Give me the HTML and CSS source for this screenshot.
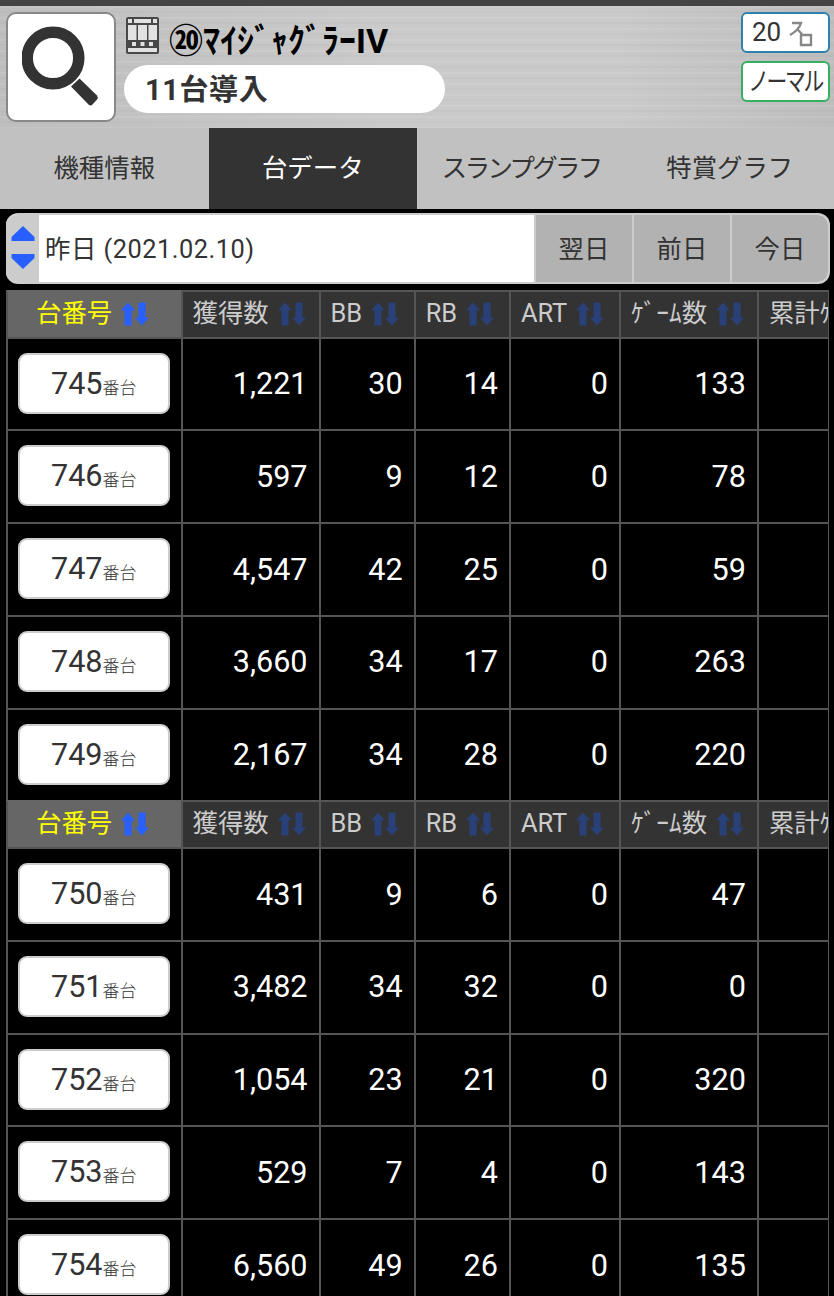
FILE: index.html
```html
<!doctype html>
<html lang="ja">
  <head>
    <meta charset="UTF-8" />
    <meta name="viewport" content="width=device-width, initial-scale=1.0" />
    <title>台データ</title>
    <link rel="stylesheet" href="styles.css">
  </head>
  <body>
    <svg class="defs" width="0" height="0">
      <symbol id="sort" viewBox="0 0 28 24">
        <path d="M7 .5 14 8.500h-3.500V23.500h-7V8.500H0z M17.500 .5h7V15.500H28L21 23.500 14 15.500h3.500z" />
      </symbol>
    </svg>

    <header class="header">
      <button class="search-btn">
        <svg width="84" height="90" viewBox="0 0 84 90">
          <circle cx="31" cy="41" r="25.800" fill="none" stroke="#333" stroke-width="11.500" />
          <path fill="#333" d="M49 69.500 57.500 61.500 75 78.500Q76.500 80.500 75 82.500L70 88Q68 89 66.500 87.500z" />
        </svg>
      </button>
      <div class="machine">
        <h1 class="machine-name">
          <svg width="33" height="37" viewBox="0 0 33 37">
            <rect width="33" height="37" rx="2" fill="#484848" />
            <path fill="#e2e2e2" d="M2 2h4v4H2zM8 2h17v4H8zM27 2h4v4h-4zM2 8h8.500v15H2zM12 8h9v15h-9zM22.500 8H31v15h-8.500zM6 25h4v4H6zM14.500 25h4v4h-4zM23 25h4v4h-4zM2 31h29v4H2z" />
          </svg>
          <span>⑳ﾏｲｼﾞｬｸﾞﾗｰIV</span>
        </h1>
        <p class="machine-count">11台導入</p>
      </div>
      <div class="tags">
        <span class="tag tag-rate">20
          <svg width="24" height="28" viewBox="0 0 24 28" fill="none" stroke="#888" stroke-width="2.400">
            <path d="M3 3H12Q10 10 1 15M8 9l5 5M12 15H22V25H12z" />
          </svg>
        </span>
        <span class="tag tag-type"><span>ノーマル</span></span>
      </div>
    </header>

    <nav class="tabs">
      <a class="tab">機種情報</a>
      <a class="tab active">台データ</a>
      <a class="tab kana">スランプグラフ</a>
      <a class="tab">特賞グラフ</a>
    </nav>

    <div class="date-bar">
      <div class="stepper">
        <svg width="24" height="44" viewBox="0 0 24 44">
          <path fill="#2860ff" d="M12 0 23.500 11v4H.5v-4zM.5 28h23v4L12 43 .5 32z" />
        </svg>
      </div>
      <div class="date-value">昨日 (2021.02.10)</div>
      <button class="day-btn">翌日</button>
      <button class="day-btn">前日</button>
      <button class="day-btn">今日</button>
    </div>

    <div class="table-wrap">
      <table class="data">
        <colgroup>
          <col class="c-no"><col class="c-get"><col class="c-bonus"><col class="c-bonus"><col class="c-art"><col class="c-game"><col class="c-total">
        </colgroup>
        <tbody>
          <tr class="head">
            <th class="sorted">台番号<svg><use href="#sort" /></svg></th>
            <th>獲得数<svg><use href="#sort" /></svg></th>
            <th>BB<svg><use href="#sort" /></svg></th>
            <th>RB<svg><use href="#sort" /></svg></th>
            <th>ART<svg><use href="#sort" /></svg></th>
            <th>ｹﾞｰﾑ数<svg><use href="#sort" /></svg></th>
            <th>累計ｹﾞｰﾑ</th>
          </tr>
          <tr><td><a class="unit">745<small>番台</small></a></td><td>1,221</td><td>30</td><td>14</td><td>0</td><td>133</td><td></td></tr>
          <tr><td><a class="unit">746<small>番台</small></a></td><td>597</td><td>9</td><td>12</td><td>0</td><td>78</td><td></td></tr>
          <tr><td><a class="unit">747<small>番台</small></a></td><td>4,547</td><td>42</td><td>25</td><td>0</td><td>59</td><td></td></tr>
          <tr><td><a class="unit">748<small>番台</small></a></td><td>3,660</td><td>34</td><td>17</td><td>0</td><td>263</td><td></td></tr>
          <tr><td><a class="unit">749<small>番台</small></a></td><td>2,167</td><td>34</td><td>28</td><td>0</td><td>220</td><td></td></tr>
          <tr class="head">
            <th class="sorted">台番号<svg><use href="#sort" /></svg></th>
            <th>獲得数<svg><use href="#sort" /></svg></th>
            <th>BB<svg><use href="#sort" /></svg></th>
            <th>RB<svg><use href="#sort" /></svg></th>
            <th>ART<svg><use href="#sort" /></svg></th>
            <th>ｹﾞｰﾑ数<svg><use href="#sort" /></svg></th>
            <th>累計ｹﾞｰﾑ</th>
          </tr>
          <tr><td><a class="unit">750<small>番台</small></a></td><td>431</td><td>9</td><td>6</td><td>0</td><td>47</td><td></td></tr>
          <tr><td><a class="unit">751<small>番台</small></a></td><td>3,482</td><td>34</td><td>32</td><td>0</td><td>0</td><td></td></tr>
          <tr><td><a class="unit">752<small>番台</small></a></td><td>1,054</td><td>23</td><td>21</td><td>0</td><td>320</td><td></td></tr>
          <tr><td><a class="unit">753<small>番台</small></a></td><td>529</td><td>7</td><td>4</td><td>0</td><td>143</td><td></td></tr>
          <tr><td><a class="unit">754<small>番台</small></a></td><td>6,560</td><td>49</td><td>26</td><td>0</td><td>135</td><td></td></tr>
        </tbody>
      </table>
    </div>
  </body>
</html>
```
FILE: styles.css
```css
* {
  box-sizing: border-box;
}
html {
  height: 100%;
  overflow: hidden;
}
body {
  margin: 0;
  height: 100%;
  overflow: hidden;
  background: #000;
  color: #333;
  font-family: Roboto, "Noto Sans CJK JP", sans-serif;
  font-size: 25.4px;
}
.defs {
  position: absolute;
}
button {
  border: 0;
  margin: 0;
  padding: 0;
  color: inherit;
  font: inherit;
}

/* Brushed metal header */
.header {
  display: flex;
  height: 128px;
  padding: 6px 4px 0 6px;
  border-top: 6px solid #444;
  background:
    repeating-linear-gradient(rgba(255, 255, 255, 0.08) 0 2px, transparent 2px 5px, rgba(0, 0, 0, 0.02) 5px 7px, transparent 7px 11px),
    linear-gradient(90deg, #bebebe, #cacaca 45%, #cacaca 75%, #bdbdbd);
}
.search-btn {
  display: flex;
  width: 110px;
  height: 110px;
  padding: 3px 0 0 14px;
  border: 2px solid #888;
  border-radius: 10px;
  background: #fff;
}
.search-btn svg {
  flex: none;
}
.machine {
  flex: 1;
  padding: 5px 0 0 8px;
}
.machine-name {
  display: flex;
  gap: 10px;
  height: 48px;
  margin: 0;
  color: #000;
  font-size: 34px;
  line-height: 49px;
  white-space: nowrap;
}
.machine-name svg {
  margin-left: 2px;
}
.machine-count {
  width: 321px;
  height: 48px;
  margin: 0;
  padding-left: 21px;
  border-radius: 24px;
  background: #fff;
  font-size: 29px;
  font-weight: bold;
  letter-spacing: 0.6px;
  line-height: 50px;
}
.tags {
  display: flex;
  flex-direction: column;
  gap: 8px;
  width: 89px;
}
.tag {
  display: flex;
  justify-content: center;
  align-items: center;
  height: 41px;
  border: 2px solid #2f80b0;
  border-radius: 6px;
  background: #fff;
  font-size: 26px;
  line-height: 36px;
  white-space: nowrap;
}
.tag-rate {
  padding: 0 6px 2px 0;
}
.tag-rate svg {
  margin: 5px 0 0 8px;
}
.tag-type {
  border-color: #35b060;
}
.tag-type span {
  letter-spacing: -3px;
  margin: 0 -10px;
  transform: scaleX(0.8);
}

.tabs {
  display: flex;
  height: 81px;
  background: #c1c1c1;
}
.tab {
  flex: 1;
  line-height: 81px;
  text-align: center;
}
.tab.active {
  background: #333;
  color: #fff;
}
.kana {
  letter-spacing: -2.6px;
}

.date-bar {
  display: flex;
  height: 71px;
  margin: 4px 4px 0 6px;
  border: 2px solid #ccc;
  border-left: 0;
  border-radius: 12px;
  overflow: hidden;
  background: #fff;
}
.stepper {
  width: 33px;
  padding: 11px 0 0 5px;
  background: #ccc;
}
.date-value {
  flex: 1;
  padding-left: 6px;
  letter-spacing: 0.5px;
  line-height: 68px;
}
.day-btn {
  width: 98px;
  border-left: 2px solid #ccc;
  background: #b2b2b2;
  line-height: 68px;
}

.table-wrap {
  margin: 6px 5px 0 6px;
  border-right: 1px solid #555;
  overflow: hidden;
}
.data {
  width: 890px;
  table-layout: fixed;
  border-collapse: separate;
  border-spacing: 0;
}
.c-no { width: 174.5px; }
.c-get { width: 138px; }
.c-bonus { width: 95.2px; }
.c-art { width: 110px; }
.c-game { width: 138px; }
.c-total { width: 139px; }
th,
td {
  padding: 0 11px 0 0;
  border-top: 2px solid #555;
  border-left: 2px solid #555;
  white-space: nowrap;
}
th {
  height: 46.7px;
  padding: 0 0 3px 10px;
  background: #333;
  color: #ccc;
  font-weight: normal;
  line-height: 36px;
  text-align: left;
  overflow: hidden;
}
th svg {
  width: 28px;
  height: 24px;
  margin-left: 9px;
  vertical-align: -4px;
  fill: #294078;
}
th.sorted {
  padding-left: 28px;
  border-top-color: #666;
  background: #666;
  color: #ff0;
}
th.sorted svg {
  fill: #2860ff;
}
td {
  height: 92.75px;
  color: #fff;
  font-size: 30.6px;
  line-height: 36px;
  text-align: right;
}
td:first-child {
  padding: 0 11px 2px 10px;
}
.unit {
  display: block;
  height: 61px;
  border: 2px solid #ccc;
  border-radius: 9px;
  background: #fff;
  color: #333;
  line-height: 57px;
  text-align: center;
}
.unit small {
  font-size: 17px;
  font-weight: 300;
}
```
